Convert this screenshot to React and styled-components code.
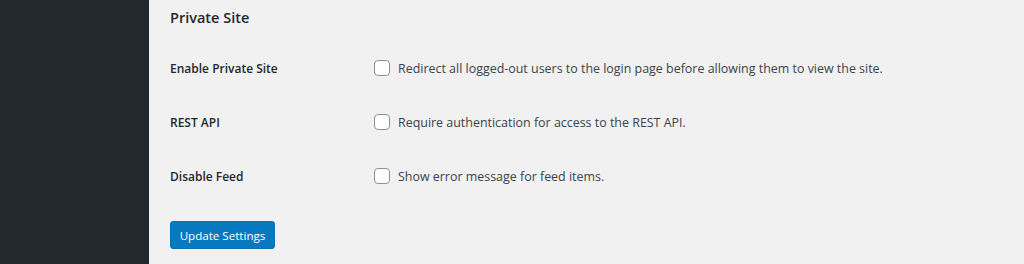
import React from 'react';
import styled, { createGlobalStyle } from 'styled-components';

const GlobalStyle = createGlobalStyle`
  html, body {
    margin: 0;
    padding: 0;
    background: #f1f1f1;
  }
  body {
    font-family: "Open Sans", "Noto Sans", sans-serif;
    color: #3c434a;
  }
`;

const Layout = styled.div`
  display: flex;
  width: 1024px;
  height: 264px;
  overflow: hidden;
`;

const Sidebar = styled.div`
  width: 149px;
  flex-shrink: 0;
  background: #23282d;
`;

const Content = styled.div`
  flex: 1;
  padding: 8px 0 0 21px;
  background: #f1f1f1;
`;

const Title = styled.h2`
  margin: 0;
  font-size: 14.5px;
  font-weight: 600;
  line-height: 20px;
  color: #23282d;
`;

const Table = styled.div`
  display: grid;
  grid-template-columns: 204px 1fr;
  margin-top: 13px;
`;

const Row = styled.div`
  display: contents;
`;

const Label = styled.div`
  height: 54px;
  display: flex;
  align-items: center;
  font-size: 12px;
  font-weight: 600;
  color: #23282d;
`;

const Field = styled.label`
  height: 54px;
  display: flex;
  align-items: center;
  gap: 8px;
  font-size: 12.45px;
  color: #3c434a;
`;

const Box = styled.span`
  width: 14px;
  height: 14px;
  border: 1px solid #8c8f94;
  border-radius: 4px;
  background: #fff;
  flex-shrink: 0;
`;

const Button = styled.button`
  display: block;
  margin-top: 18px;
  width: 105px;
  height: 28px;
  border: 1px solid #0770b0;
  border-radius: 3px;
  background: #0879be;
  color: #fff;
  font-family: inherit;
  font-size: 11.6px;
  padding: 0;
  cursor: pointer;
`;

const settings = [
  { label: 'Enable Private Site', text: 'Redirect all logged-out users to the login page before allowing them to view the site.' },
  { label: 'REST API', text: 'Require authentication for access to the REST API.' },
  { label: 'Disable Feed', text: 'Show error message for feed items.' },
];

export default function App() {
  return (
    <Layout>
      <GlobalStyle />
      <Sidebar />
      <Content>
        <Title>Private Site</Title>
        <Table>
          {settings.map((s, i) => (
            <Row key={i}>
              <Label>{s.label}</Label>
              <Field>
                <Box />
                {s.text}
              </Field>
            </Row>
          ))}
        </Table>
        <Button type="button">Update Settings</Button>
      </Content>
    </Layout>
  );
}
